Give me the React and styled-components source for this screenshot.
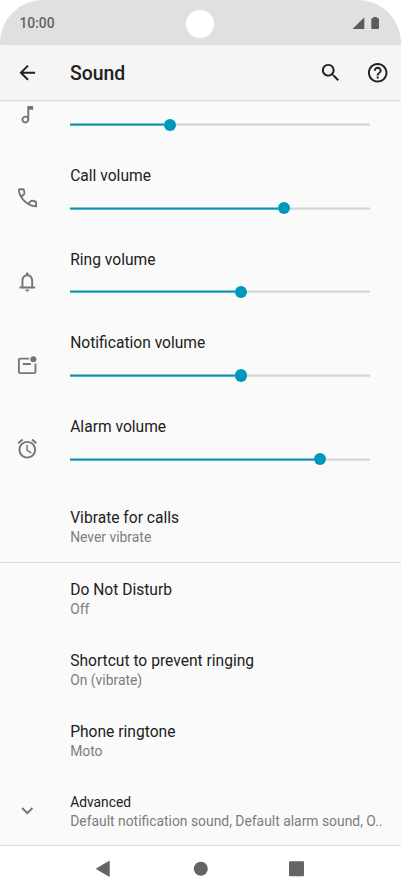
import React from "react";
import styled, { createGlobalStyle } from "styled-components";

const GlobalStyle = createGlobalStyle`
  * { box-sizing: border-box; }
  body { margin: 0; background: #fff; font-family: Roboto, sans-serif; }
`;

const Phone = styled.div`
  width: 401px;
  height: 892px;
  display: flex;
  flex-direction: column;
  overflow: hidden;
  background: #fff;
`;

const StatusBar = styled.div`
  position: relative;
  flex: none;
  height: 45px;
  padding: 1px 21px 0 19.5px;
  display: flex;
  align-items: center;
  justify-content: space-between;
  background: #e0e0e0;
  border-radius: 43px 43px 0 0;
`;

const Clock = styled.span`
  font-size: 13.8px;
  font-weight: 500;
  color: #636363;
`;

const Camera = styled.span`
  position: absolute;
  left: 186.4px;
  top: 10.4px;
  width: 28px;
  height: 28px;
  border-radius: 50%;
  background: #fff;
`;

const StatusIcons = styled.svg`
  display: block;
  width: 28px;
  height: 14px;
  margin-top: -1px;
`;

const AppBar = styled.header`
  position: relative;
  z-index: 1;
  flex: none;
  height: 55px;
  padding: 1px 12px 0 15.6px;
  display: flex;
  align-items: center;
  background: #f5f5f5;
  box-shadow: 0 1px 2px rgba(0, 0, 0, 0.17);
`;

const Title = styled.h1`
  flex: 1;
  margin: 1px 0 0 31px;
  font-size: 19.4px;
  line-height: 24px;
  font-weight: 500;
  color: #212121;
`;

const Icon = styled.svg`
  display: block;
  flex: none;
  width: 23.4px;
  height: 23.4px;
  fill: ${(p) => p.$color || "#757575"};
`;

const Actions = styled.div`
  display: flex;
  gap: 23.4px;
`;

const Content = styled.main`
  flex: none;
  height: 745px;
  overflow: hidden;
  background: #fafafa;
`;

const Row = styled.div`
  display: grid;
  grid-template-columns: 54.6px 1fr;
  padding-left: 15.6px;
`;

const VolumeRow = styled(Row)`
  height: ${(p) => (p.$partial ? 44.8 : 83.6)}px;
  align-items: end;
`;

const IconSlot = styled.div`
  width: 23.4px;
  display: flex;
  justify-content: center;
  align-items: center;
  height: 23.4px;
  margin-bottom: ${(p) => p.$bottom || 0}px;
  margin-top: ${(p) => p.$top || 0}px;
`;

const VolumeBody = styled.div`
  padding: 0 31px 14px 0;
  display: flex;
  flex-direction: column;
  gap: 16.1px;
`;

const Label = styled.div`
  font-size: ${(p) => (p.$small ? 13.8 : 15.6)}px;
  line-height: 20px;
  color: #212121;
`;

const Track = styled.div`
  height: 12px;
  display: flex;
  align-items: center;
`;

const Filled = styled.div`
  height: 3px;
  width: ${(p) => p.$width - 6}px;
  background: linear-gradient(#7fc6d6 1px, #0d90b0 1px 2px, #55b3c9 2px);
`;

const Thumb = styled.div`
  width: 12.2px;
  height: 12.2px;
  border-radius: 50%;
  background: #0097bd;
`;

const Rest = styled.div`
  flex: 1;
  height: 3px;
  background: linear-gradient(#e6e6e6 1px, #d5d5d5 1px 2px, #dfdfdf 2px);
`;

const SettingRow = styled(Row)`
  height: 71.4px;
  padding-top: 17px;
  margin-top: ${(p) => p.$gap || 0}px;
`;

const SettingText = styled.div`
  grid-column: 2;
  min-width: 0;
`;

const Summary = styled.div`
  font-size: 13.88px;
  line-height: 20px;
  margin-top: -1px;
  color: #7d7d7d;
  white-space: nowrap;
`;

const Divider = styled.div`
  height: 1px;
  margin-top: -1px;
  background: #dadada;
`;

const AdvancedRow = styled(Row)`
  height: 69px;
  padding-top: 15.5px;
`;

const NavBar = styled.nav`
  flex: 1;
  border-top: 1px solid #dedede;
  display: flex;
  justify-content: center;
`;

const NavIcons = styled.svg`
  display: block;
  width: 401px;
  height: 46px;
  fill: #646464;
`;

const LEADING_VIEWBOX = "0.4 0 24 24";

const volumes = [
  {
    value: 99.5,
    icon: <path d="M12 3l.01 10.55c-.59-.34-1.27-.55-2-.55C7.79 13 6 14.79 6 17s1.79 4 4.01 4S14 19.21 14 17V7h4V3h-6zm-1.99 16c-1.1 0-2-.9-2-2s.9-2 2-2 2 .9 2 2-.9 2-2 2z" />,
  },
  {
    label: "Call volume",
    value: 214,
    icon: (
      <path
        d="M3.3 3.3C3.6 12 12 20.6 21 20.9V16.2Q16.7 14.4 15.4 15.7L12.8 18.3M3.3 3.3H8.2Q9.7 7.5 8.5 8.6L5.8 11.3"
        fill="none"
        stroke="#757575"
        strokeWidth="1.9"
        strokeLinejoin="round"
      />
    ),
  },
  {
    label: "Ring volume",
    value: 171,
    icon: <path d="M12 22c1.1 0 2-.9 2-2h-4c0 1.1.9 2 2 2zM18 17v-6c0-3.07-1.63-5.64-4.5-6.32V4c0-.83-.67-1.5-1.5-1.5S10.5 3.17 10.5 4v.68C7.64 5.36 6 7.92 6 11v6H4v2h16v-2H18zM16 17H8v-6c0-2.48 1.51-4.5 4-4.5s4 2.02 4 4.5V17z" />,
  },
  {
    label: "Notification volume",
    value: 171,
    icon: (
      <>
        <path d="M13.8 4.7H4.6Q3.4 4.7 3.4 5.9V18.4Q3.4 19.6 4.6 19.6H18.8Q20.4 19.6 20.4 18.4V9.8M7.3 10.3H15.7" fill="none" stroke="#757575" strokeWidth="1.9" />
        <circle cx="18.2" cy="5.3" r="3.1" />
      </>
    ),
  },
  {
    label: "Alarm volume",
    value: 250,
    icon: <path d="M22 5.72l-4.6-3.86-1.29 1.53 4.6 3.86L22 5.72zM7.88 3.39L6.6 1.86 2 5.71l1.29 1.53 4.59-3.85zM12.5 8H11v6l4.75 2.85.75-1.23-4-2.37V8zM12 4c-4.97 0-9 4.03-9 9s4.02 9 9 9c4.97 0 9-4.03 9-9s-4.03-9-9-9zm0 16c-3.87 0-7-3.13-7-7s3.13-7 7-7 7 3.13 7 7-3.13 7-7 7z" />,
  },
];

const settings = [
  ["Do Not Disturb", "Off"],
  ["Shortcut to prevent ringing", "On (vibrate)"],
  ["Phone ringtone", "Moto"],
];

function Volume({ label, value, icon }) {
  return (
    <VolumeRow $partial={!label}>
      <IconSlot $bottom={18.6}>
        <Icon viewBox={LEADING_VIEWBOX}>{icon}</Icon>
      </IconSlot>
      <VolumeBody>
        {label && <Label>{label}</Label>}
        <Track>
          <Filled $width={value} />
          <Thumb />
          <Rest />
        </Track>
      </VolumeBody>
    </VolumeRow>
  );
}

function Setting({ title, summary, gap }) {
  return (
    <SettingRow $gap={gap}>
      <SettingText>
        <Label>{title}</Label>
        <Summary>{summary}</Summary>
      </SettingText>
    </SettingRow>
  );
}

export default function App() {
  return (
    <Phone>
      <GlobalStyle />
      <StatusBar>
        <Clock>10:00</Clock>
        <Camera />
        <StatusIcons viewBox="0 0 28 14" fill="#5c5c5c">
          <path d="M0.5 13H12.3V1.2Z" />
          <path d="M19.3 13V3Q19.3 2.2 20.1 2.2H21.2V1H25V2.2H26.2Q27 2.2 27 3V12.2Q27 13 26.2 13H20.1Q19.3 13 19.3 12.2Z" />
        </StatusIcons>
      </StatusBar>
      <AppBar>
        <Icon viewBox={LEADING_VIEWBOX} $color="#212121">
          <path d="M20 11H7.83l5.59-5.59L12 4l-8 8 8 8 1.41-1.41L7.83 13H20v-2z" />
        </Icon>
        <Title>Sound</Title>
        <Actions>
          <Icon viewBox="0 0 24 24" $color="#212121">
            <path d="M15.5 14h-.79l-.28-.27C15.41 12.59 16 11.11 16 9.5 16 5.91 13.09 3 9.5 3S3 5.91 3 9.5 5.91 16 9.5 16c1.61 0 3.09-.59 4.23-1.57l.27.28v.79l5 4.99L20.49 19l-4.99-5zm-6 0C7.01 14 5 11.99 5 9.5S7.01 5 9.5 5 14 7.01 14 9.5 11.99 14 9.5 14z" />
          </Icon>
          <Icon viewBox="0 0 24 24" $color="#212121">
            <path d="M11 18h2v-2h-2v2zm1-16C6.48 2 2 6.48 2 12s4.48 10 10 10 10-4.48 10-10S17.52 2 12 2zm0 18c-4.41 0-8-3.59-8-8s3.59-8 8-8 8 3.59 8 8-3.59 8-8 8zm0-14c-2.21 0-4 1.79-4 4h2c0-1.1.9-2 2-2s2 .9 2 2c0 2-3 1.75-3 5h2c0-2.25 3-2.5 3-5 0-2.21-1.79-4-4-4z" />
          </Icon>
        </Actions>
      </AppBar>
      <Content>
        {volumes.map((v) => (
          <Volume key={v.label || "first"} {...v} />
        ))}
        <Setting title="Vibrate for calls" summary="Never vibrate" gap={12} />
        <Divider />
        {settings.map(([title, summary]) => (
          <Setting key={title} title={title} summary={summary} />
        ))}
        <AdvancedRow>
          <IconSlot $top={7}>
            <Icon viewBox={LEADING_VIEWBOX}>
              <path d="M7.41 8.59L12 13.17l4.59-4.58L18 10l-6 6-6-6 1.41-1.41z" />
            </Icon>
          </IconSlot>
          <SettingText>
            <Label $small>Advanced</Label>
            <Summary>Default notification sound, Default alarm sound, O..</Summary>
          </SettingText>
        </AdvancedRow>
      </Content>
      <NavBar>
        <NavIcons viewBox="0 0 401 46">
          <path d="M96.5 22.8L109.2 15.3V30.3Z" stroke="#646464" strokeWidth="1" strokeLinejoin="round" />
          <circle cx="200.8" cy="22.8" r="7" />
          <rect x="289" y="15.3" width="15" height="15" rx="1" />
        </NavIcons>
      </NavBar>
    </Phone>
  );
}
